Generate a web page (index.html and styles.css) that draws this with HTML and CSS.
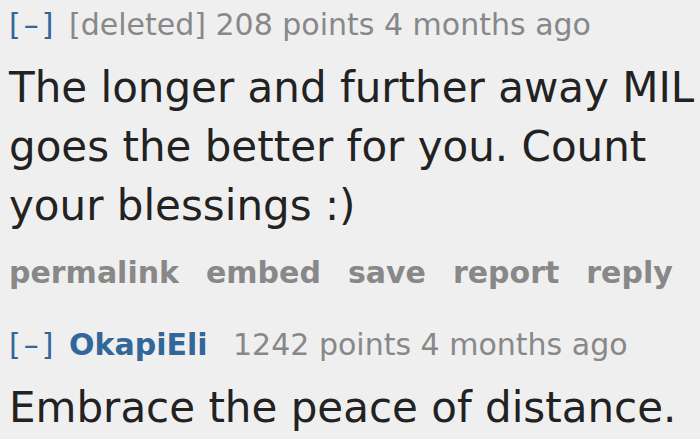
FILE: index.html
```html
<!DOCTYPE html>
<html lang="en">
  <head>
    <meta charset="UTF-8" />
    <title>Comments</title>
    <link rel="stylesheet" href="styles.css">
  </head>
  <body>
    <div class="comment">
      <p class="tagline">
        <a class="expand">[–]</a>
        <span class="author deleted">[deleted]</span>
        <span class="score">208 points</span>
        <time>4 months ago</time>
      </p>
      <div class="md">
        The longer and further away MIL goes the better for you. Count your blessings :)
      </div>
      <ul class="buttons">
        <li>permalink</li>
        <li>embed</li>
        <li>save</li>
        <li>report</li>
        <li>reply</li>
      </ul>
    </div>

    <div class="comment">
      <p class="tagline">
        <a class="expand">[–]</a>
        <a class="author">OkapiEli</a>
        <span class="score">1242 points</span>
        <time>4 months ago</time>
      </p>
      <div class="md">Embrace the peace of distance.</div>
    </div>
  </body>
</html>
```

FILE: styles.css
```css
body {
  margin: 0;
  padding: 0 2px 0 9px;
  background: #efefef;
  font-family: "DejaVu Sans", Verdana, sans-serif;
  overflow: hidden;
}
.comment + .comment {
  margin-top: 27px;
}
.tagline {
  margin: 0;
  padding-top: 5px;
  font-size: 30px;
  line-height: 40px;
  color: #888;
}
.expand {
  color: #369;
  letter-spacing: 3px;
  margin-right: 3px;
}
.author {
  color: #369;
  font-weight: bold;
  margin-right: 16px;
}
.author.deleted {
  color: #888;
  font-weight: normal;
  margin-right: 0;
}
.md {
  margin-top: 13px;
  font-size: 42px;
  line-height: 59px;
  color: #222;
}
.buttons {
  list-style: none;
  margin: 18px 0 0;
  padding: 0;
  display: flex;
  gap: 27px;
  font-size: 30px;
  line-height: 40px;
  font-weight: bold;
  color: #888;
}
```
